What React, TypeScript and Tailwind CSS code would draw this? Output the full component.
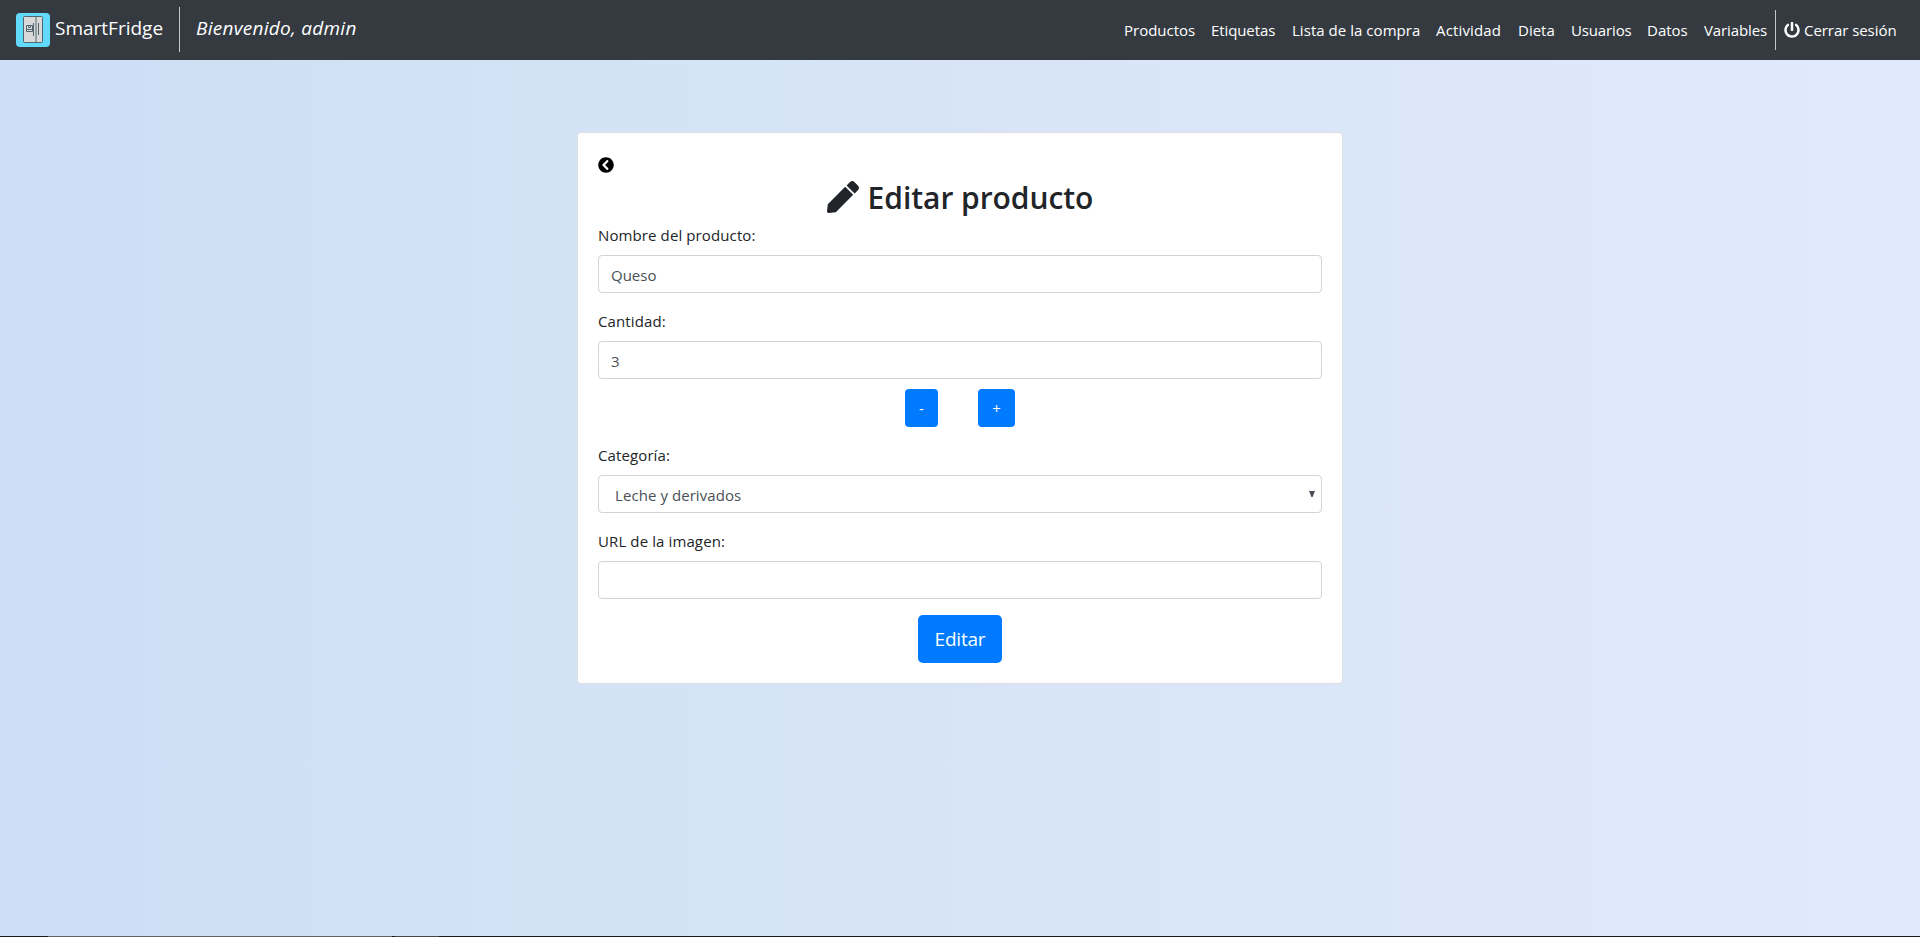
import type { ReactNode } from "react";
import { FaChevronCircleLeft, FaPen, FaPowerOff } from "react-icons/fa";

const links = [
  { text: "Productos", box: "w-[87px]" },
  { text: "Etiquetas", box: "w-[81px] tracking-[-0.1px]" },
  { text: "Lista de la compra", box: "w-[144px] tracking-[0.04px]" },
  { text: "Actividad", box: "w-[82px] tracking-[0.15px]" },
  { text: "Dieta", box: "w-[53px]" },
  { text: "Usuarios", box: "w-[76px] tracking-[-0.15px]" },
  { text: "Datos", box: "w-[57px]" },
  { text: "Variables", box: "w-[79px] tracking-[-0.1px]" },
];

function FridgeLogo() {
  return (
    <svg width="34" height="34" viewBox="0 0 34 34" className="shrink-0">
      <rect width="34" height="34" rx="4" fill="#61dafb" />
      <rect x="7.5" y="3.5" width="19" height="26" rx="1" fill="#d9d9d9" stroke="#50666c" />
      <rect x="19" y="4" width="2" height="25" fill="#95a0a2" />
      <path d="M17.5 10v13M22.5 10v12" stroke="#50666c" fill="none" />
      <path d="M10.5 12.5h6v6h-6zM10.5 16.5h6M12.5 12.5v2h2v-2" stroke="#50666c" fill="none" />
    </svg>
  );
}

function Field({ label, children }: { label: string; children: ReactNode }) {
  return (
    <div className="flex flex-col gap-2">
      <label className="h-6 leading-6 tracking-[0.11px] whitespace-nowrap">{label}</label>
      {children}
    </div>
  );
}

const control =
  "block h-[38px] w-full rounded-[4px] border border-[#ced4da] bg-white px-3 pt-[1px] text-[#495057] outline-none";

export default function App() {
  return (
    <div className="flex h-[937px] w-full flex-col overflow-hidden bg-linear-to-r from-[#cfddf5] via-[#d3e2f5] via-28% to-[#e0eafc] font-['Open_Sans',sans-serif] text-[15px] text-[#212529]">
      <nav className="flex h-[60px] shrink-0 items-center bg-[#353a41] px-4 text-white">
        <div className="flex h-full items-center">
          <FridgeLogo />
          <span className="ml-[5px] w-[124px] pb-[4px] text-[19px] whitespace-nowrap">SmartFridge</span>
          <span className="mb-[2px] h-[45px] w-px bg-[#c4c6c8]" />
          <span className="ml-4 pb-[4px] text-[19px] tracking-[0.28px] whitespace-nowrap italic">
            Bienvenido, admin
          </span>
        </div>
        <div className="ml-auto flex h-10 items-center">
          {links.map((l) => (
            <a key={l.text} className={`${l.box} px-2 whitespace-nowrap`}>
              {l.text}
            </a>
          ))}
          <span className="h-10 w-px bg-[#c4c6c8]" />
          <a className="flex w-[128px] items-center gap-1 pl-2 tracking-[-0.05px] whitespace-nowrap">
            <FaPowerOff className="size-4 shrink-0" />
            Cerrar sesión
          </a>
        </div>
      </nav>
      <main className="mx-auto mt-[72px] flex h-[552px] w-[766px] shrink-0 flex-col gap-4 rounded-[4px] border border-[#dfdfdf] bg-white px-5 pt-5">
        <div className="flex flex-col">
          <div className="flex h-6 items-center">
            <FaChevronCircleLeft className="size-4 text-black" />
          </div>
          <h2 className="mb-2 flex h-[38px] items-center justify-center gap-[9px] pt-[2px] text-[30px] font-semibold tracking-[-0.05px] whitespace-nowrap">
            <FaPen className="size-8" />
            Editar producto
          </h2>
          <Field label="Nombre del producto:">
            <input className={control} defaultValue="Queso" />
          </Field>
        </div>
        <div>
          <Field label="Cantidad:">
            <input className={control} defaultValue="3" />
          </Field>
          <div className="mt-[10px] flex justify-center gap-10">
            <button className="h-[38px] w-[33px] rounded-[4px] bg-[#007bff] text-white">-</button>
            <button className="h-[38px] w-[37px] rounded-[4px] bg-[#007bff] text-white">+</button>
          </div>
        </div>
        <Field label="Categoría:">
          <div className={`${control} flex items-center justify-between pr-[6px] pl-4`}>
            <span className="pt-[2px] tracking-[0.07px]">Leche y derivados</span>
            <svg width="6" height="6" viewBox="0 0 6 6" className="mb-[2px]">
              <path d="M0 0h6L3.6 6H2.4z" fill="#495057" />
            </svg>
          </div>
        </Field>
        <Field label="URL de la imagen:">
          <input className={control} />
        </Field>
        <button className="h-12 w-[84px] self-center rounded-[5px] bg-[#007bff] pt-px text-[19px] tracking-[-0.2px] text-white">
          Editar
        </button>
      </main>
      <div className="mt-auto flex h-px shrink-0">
        <span className="w-12 bg-[#17191c]" />
        <span className="w-[344px] bg-[#5f6266]" />
        <span className="w-[3px] bg-[#17191c]" />
        <span className="w-[44px] bg-[#44474b]" />
        <span className="flex-1 bg-[#17191c]" />
      </div>
    </div>
  );
}
